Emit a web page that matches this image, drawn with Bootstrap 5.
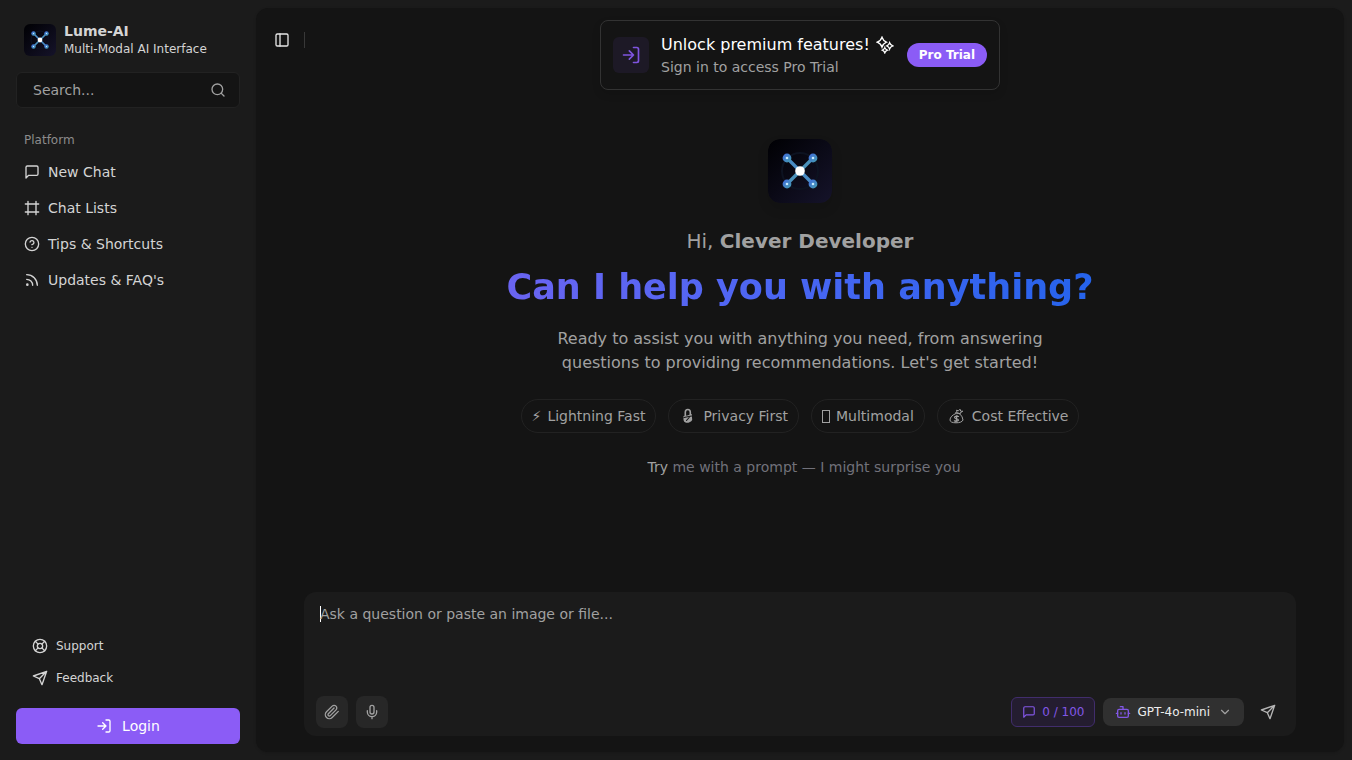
<!DOCTYPE html>
<html lang="en" data-bs-theme="dark">
<head>
<meta charset="utf-8">
<meta name="viewport" content="width=device-width, initial-scale=1">
<title>Lume-AI</title>
<link href="https://cdn.jsdelivr.net/npm/bootstrap@5.3.0/dist/css/bootstrap.min.css" rel="stylesheet">
<style>
:root { --side: #1b1b1b; --main: #141414; --muted: #a1a1a1; --accent: #8b5cf6; }
body { font-family: "DejaVu Sans", sans-serif; font-size: 14px; line-height: 20px; background: var(--side); color: #d4d4d4; }
svg { flex: none; fill: none; stroke: currentColor; stroke-width: 2; stroke-linecap: round; stroke-linejoin: round; }
.logo { stroke: none; }
.text-12 { font-size: 12px; line-height: 16px; }
.text-16 { font-size: 16px; line-height: 24px; }
.text-20 { font-size: 20px; line-height: 28px; }
.text-muted-2 { color: var(--muted); }
.sidebar { width: 256px; flex: none; padding: 16px; }
.brand { padding: 0 8px; height: 48px; }
.brand-text { padding-bottom: 2px; }
.search-box { background: var(--main); border: 1px solid #222; border-radius: 6px; height: 36px; padding: 0 13px 0 16px; margin-top: 8px; color: var(--muted); }
.search-box input, .prompt-box textarea { background: none; border: 0; outline: 0; padding: 0; color: #fafafa; min-width: 0; resize: none; }
input::placeholder, textarea::placeholder { color: var(--muted); opacity: 1; }
.side-title { color: #8c8c8c; padding: 0 8px; margin-top: 16px; height: 32px; }
.side-link { color: #d4d4d4; padding: 0 8px; height: 32px; gap: 8px; border-radius: 6px; }
.side-link.sm-link { padding: 0 16px; }
.btn-accent { background: var(--accent); color: #fff; border: 0; font-size: 14px; height: 36px; border-radius: 6px; margin-top: 14px; gap: 10px; }
.btn-accent:hover { background: #7c4df0; color: #fff; }
.panel { background: var(--main); margin: 8px 8px 8px 0; border-radius: 12px; box-shadow: 0 1px 3px rgba(0,0,0,.15); min-width: 0; }
.toggle-bar { top: 16px; left: 12px; }
.icon-btn { width: 28px; height: 32px; padding: 0; color: #e5e5e5; border: 0; }
.divider { width: 1px; height: 16px; background: #383838; margin-left: 8px; }
.promo { margin-top: 12px; width: 400px; max-width: 100%; height: 70px; border: 1px solid #333; border-radius: 8px; padding: 0 12px; gap: 12px; box-shadow: 0 4px 8px rgba(0,0,0,.12); }
.promo-title { gap: 6px; }
.promo-icon { width: 36px; height: 36px; border-radius: 6px; background: #1f1a29; color: var(--accent); opacity: .9; }
.btn-pill { background: var(--accent); color: #fff; font-size: 12px; line-height: 16px; font-weight: 700; padding: 4px 12px; border: 0; border-radius: 12px; }
.hero { padding-top: 49px; }
.hero .logo-wrap { border-radius: 12px; box-shadow: 0 6px 12px rgba(0,0,0,.12); }
.headline { font-size: 35px; line-height: 40px; font-weight: 700; margin: 12px 0 0; background: linear-gradient(90deg, #6a64f1, #4f66f3 40%, #2563eb); -webkit-background-clip: text; background-clip: text; color: transparent; }
.intro { max-width: 512px; margin: 20px 0 0; }
.chips { gap: 12px; }
.chip { border: 1px solid #222; border-radius: 17px; height: 34px; padding: 0 10px; gap: 6px; color: var(--muted); }
.no-glyph { width: 8px; height: 13px; border: 1px solid var(--muted); }
.hint { color: #71717a; margin: 24px 0 0; padding-left: 8px; }
.prompt-box { background: var(--side); border-radius: 12px; margin: 0 48px 16px; padding: 12px 12px 8px; height: 144px; }
/* a thin caret at the start of the empty prompt */
.prompt-box textarea { margin: 0 4px; caret-color: #fff; }
.prompt-box textarea:placeholder-shown { background: linear-gradient(#fff, #fff) 0 2px / 1px 16px no-repeat; }
.tool-btn { width: 32px; height: 32px; background: #272727; border: 0; border-radius: 8px; color: var(--muted); padding: 0; }
.credit { border: 1px solid #412d6c; background: #241d30; color: #8257e5; height: 30px; padding: 0 10px; border-radius: 6px; gap: 6px; }
.model-btn { background: #303030; border: 0; color: #ededed; height: 28px; padding: 0 12px; border-radius: 8px; gap: 6px; }
.model-btn .bot-icon { color: #8257e5; }
.model-btn .down-icon { color: var(--muted); margin-left: 2px; }
.send-btn { width: 32px; height: 32px; color: #b5b5b5; border: 0; padding: 0; }
</style>
</head>
<body>
<svg class="position-absolute" width="0" height="0" aria-hidden="true">
  <defs>
    <linearGradient id="tile" x1="0" y1="0" x2="1" y2="1"><stop stop-color="#000003"/><stop offset="1" stop-color="#15132a"/></linearGradient>
    <linearGradient id="node" x1="0" y1="0" x2="1" y2="1"><stop stop-color="#4169df"/><stop offset="1" stop-color="#459fae"/></linearGradient>
  </defs>
  <symbol id="lume" viewBox="0 0 64 64">
    <rect width="64" height="64" rx="12" fill="url(#tile)"/>
    <circle cx="32" cy="32" r="18" fill="none" stroke="#0d1220"/>
    <path d="M19 19L45 45" stroke="#4a8cc4" stroke-width="3.4"/><path d="M45 19L19 45" stroke="#4b91bb" stroke-width="3.4"/>
    <g fill="url(#node)"><circle cx="19" cy="19" r="4.4"/><circle cx="45" cy="19" r="4.4"/><circle cx="19" cy="45" r="4.4"/><circle cx="45" cy="45" r="4.4"/></g>
    <g fill="#c8ecff"><circle cx="19" cy="19" r="1.3"/><circle cx="45" cy="19" r="1.3"/><circle cx="19" cy="45" r="1.3"/><circle cx="45" cy="45" r="1.3"/></g>
    <circle cx="32" cy="32" r="4.8" fill="#fff"/>
  </symbol>
  <symbol id="chat" viewBox="0 0 24 24"><path d="M21 15a2 2 0 0 1-2 2H7l-4 4V5a2 2 0 0 1 2-2h14a2 2 0 0 1 2 2z"/></symbol>
  <symbol id="frame" viewBox="0 0 24 24"><path d="M22 6H2M22 18H2M6 2v20M18 2v20"/></symbol>
  <symbol id="help" viewBox="0 0 24 24"><circle cx="12" cy="12" r="10"/><path d="M9.09 9a3 3 0 0 1 5.83 1c0 2-3 3-3 3M12 17h.01"/></symbol>
  <symbol id="rss" viewBox="0 0 24 24"><path d="M4 11a9 9 0 0 1 9 9M4 4a16 16 0 0 1 16 16"/><circle cx="5" cy="19" r="1"/></symbol>
  <symbol id="buoy" viewBox="0 0 24 24"><circle cx="12" cy="12" r="10"/><path d="m4.93 4.93 4.24 4.24M14.83 9.17l4.24-4.24M14.83 14.83l4.24 4.24M9.17 14.83l-4.24 4.24"/><circle cx="12" cy="12" r="4"/></symbol>
  <symbol id="send" viewBox="0 0 24 24"><path d="m22 2-7 20-4-9-9-4ZM22 2 11 13"/></symbol>
  <symbol id="login" viewBox="0 0 24 24"><path d="M15 3h4a2 2 0 0 1 2 2v14a2 2 0 0 1-2 2h-4M10 17l5-5-5-5M15 12H3"/></symbol>
  <symbol id="search" viewBox="0 0 24 24"><circle cx="11" cy="11" r="8"/><path d="m21 21-4.3-4.3"/></symbol>
  <symbol id="panel" viewBox="0 0 24 24"><rect x="3" y="3" width="18" height="18" rx="2"/><path d="M9 3v18"/></symbol>
  <symbol id="clip" viewBox="0 0 24 24"><path d="m21.44 11.05-9.19 9.19a6 6 0 0 1-8.49-8.49l8.57-8.57A4 4 0 1 1 18 8.84l-8.59 8.57a2 2 0 0 1-2.83-2.83l8.49-8.48"/></symbol>
  <symbol id="mic" viewBox="0 0 24 24"><path d="M12 2a3 3 0 0 0-3 3v7a3 3 0 0 0 6 0V5a3 3 0 0 0-3-3ZM19 10v2a7 7 0 0 1-14 0v-2M12 19v3"/></symbol>
  <symbol id="bot" viewBox="0 0 24 24"><path d="M12 8V4H8"/><rect x="4" y="8" width="16" height="12" rx="2"/><path d="M2 14h2M20 14h2M15 13v2M9 13v2"/></symbol>
  <symbol id="down" viewBox="0 0 24 24"><path d="m6 9 6 6 6-6"/></symbol>
  <symbol id="sparkles" viewBox="0 0 18 18"><g stroke-width="1.3" stroke-linejoin="miter"><path d="M6 1.2Q7.2 4.8 10.4 6.2Q7.2 7.6 6 11.2Q4.8 7.6 1.2 6.2Q4.800 4.800 6 1.200Z"/><path d="M13.600 6.800Q14.300 9 16.800 9.900Q14.300 10.800 13.600 13Q12.900 10.800 10.800 9.900Q12.900 9 13.600 6.800Z"/><path d="M8.800 11.600Q9.400 13.400 11.400 14.200Q9.400 15 8.800 16.800Q8.200 15 6.400 14.200Q8.200 13.400 8.800 11.600Z"/></g></symbol>
  <symbol id="lock" viewBox="0 0 18 16"><path d="M6.300 8V4.200Q6.300 1.500 8.800 1.500T11.300 4.200V7" stroke-width="1.600"/><path d="M4.500 8Q8 7.800 12.800 6L13.200 12Q11.500 15 7 14.800Q4.700 14.300 4.500 12Z" fill="currentColor" stroke="none"/><path d="M7.500 12.500L10.200 9.500M5 9.500L12.500 8" stroke="#141414" stroke-width="1.100"/></symbol>
  <symbol id="money" viewBox="0 0 18 16"><g stroke-width="1"><path d="M8.200 5.300Q2 8 2 12Q2.200 14.800 8 14.800T15 12Q15 8 11.200 5.500ZM7.500 4.800L12.500 5.800M9 4.500L8.500 2.200L10.500 2.800L12 1.200L12.800 3.300L14.800 3.200L11.800 5.200"/><path d="M10.500 8.500Q7 7.500 6.500 9.200C6.500 11 10.500 10.300 10.500 12.200Q9.500 13.700 6.300 12.800M8.900 7.300L8 14" stroke-width="1.200"/></g></symbol>
</svg>

<div class="d-flex vh-100">
  <aside class="sidebar d-flex flex-column">
    <div class="brand d-flex align-items-center gap-2">
      <svg class="logo" width="32" height="32"><use href="#lume"/></svg>
      <div class="brand-text d-flex flex-column"><strong>Lume-AI</strong><span class="text-12">Multi-Modal AI Interface</span></div>
    </div>
    <label class="search-box d-flex align-items-center">
      <input class="flex-grow-1" type="text" placeholder="Search..." aria-label="Search">
      <svg width="16" height="16"><use href="#search"/></svg>
    </label>
    <div class="side-title text-12 d-flex align-items-center">Platform</div>
    <nav class="d-flex flex-column gap-1">
      <a href="#" class="side-link d-flex align-items-center text-decoration-none"><svg width="16" height="16"><use href="#chat"/></svg>New Chat</a>
      <a href="#" class="side-link d-flex align-items-center text-decoration-none"><svg width="16" height="16"><use href="#frame"/></svg>Chat Lists</a>
      <a href="#" class="side-link d-flex align-items-center text-decoration-none"><svg width="16" height="16"><use href="#help"/></svg>Tips &amp; Shortcuts</a>
      <a href="#" class="side-link d-flex align-items-center text-decoration-none"><svg width="16" height="16"><use href="#rss"/></svg>Updates &amp; FAQ's</a>
    </nav>
    <div class="mt-auto">
      <a href="#" class="side-link sm-link text-12 d-flex align-items-center text-decoration-none"><svg width="16" height="16"><use href="#buoy"/></svg>Support</a>
      <a href="#" class="side-link sm-link text-12 d-flex align-items-center text-decoration-none"><svg width="16" height="16"><use href="#send"/></svg>Feedback</a>
      <button type="button" class="btn btn-accent w-100 d-flex align-items-center justify-content-center"><svg width="16" height="16"><use href="#login"/></svg>Login</button>
    </div>
  </aside>

  <main class="panel flex-grow-1 position-relative d-flex flex-column">
    <div class="toggle-bar position-absolute d-flex align-items-center">
      <button type="button" class="btn icon-btn d-flex align-items-center justify-content-center" aria-label="Toggle sidebar"><svg width="16" height="16"><use href="#panel"/></svg></button>
      <span class="divider"></span>
    </div>

    <div class="promo d-flex align-items-center align-self-center">
      <span class="promo-icon d-flex align-items-center justify-content-center flex-shrink-0"><svg width="20" height="20"><use href="#login"/></svg></span>
      <div class="flex-grow-1 text-nowrap"><div class="promo-title text-16 text-white d-flex align-items-center">Unlock premium features!<svg width="18" height="18"><use href="#sparkles"/></svg></div><div class="text-muted-2">Sign in to access Pro Trial</div></div>
      <button type="button" class="btn btn-pill text-nowrap">Pro Trial</button>
    </div>

    <section class="hero d-flex flex-column align-items-center text-center">
      <svg class="logo logo-wrap" width="64" height="64"><use href="#lume"/></svg>
      <p class="text-20 text-muted-2 mt-4 mb-0">Hi, <strong>Clever Developer</strong></p>
      <h1 class="headline">Can I help you with anything?</h1>
      <p class="intro text-16 text-muted-2">Ready to assist you with anything you need, from answering questions to providing recommendations. Let's get started!</p>
      <div class="chips d-flex flex-wrap justify-content-center mt-4">
        <span class="chip d-flex align-items-center"><span>⚡</span>Lightning Fast</span>
        <span class="chip d-flex align-items-center"><svg width="18" height="16"><use href="#lock"/></svg>Privacy First</span>
        <span class="chip d-flex align-items-center"><span class="no-glyph"></span>Multimodal</span>
        <span class="chip d-flex align-items-center"><svg width="18" height="16"><use href="#money"/></svg>Cost Effective</span>
      </div>
      <p class="hint"><span class="text-muted-2">Try</span> me with a prompt — I might surprise you</p>
    </section>

    <form class="prompt-box d-flex flex-column mt-auto" onsubmit="return false">
      <textarea class="flex-grow-1" placeholder="Ask a question or paste an image or file..." aria-label="Prompt"></textarea>
      <div class="d-flex align-items-center gap-2">
        <button type="button" class="btn tool-btn d-flex align-items-center justify-content-center" aria-label="Attach file"><svg width="16" height="16"><use href="#clip"/></svg></button>
        <button type="button" class="btn tool-btn d-flex align-items-center justify-content-center" aria-label="Record voice"><svg width="16" height="16"><use href="#mic"/></svg></button>
        <span class="credit text-12 d-flex align-items-center ms-auto"><svg width="14" height="14"><use href="#chat"/></svg>0 / 100</span>
        <button type="button" class="btn model-btn text-12 d-flex align-items-center"><svg class="bot-icon" width="16" height="16"><use href="#bot"/></svg>GPT-4o-mini<svg class="down-icon" width="14" height="14"><use href="#down"/></svg></button>
        <button type="submit" class="btn send-btn d-flex align-items-center justify-content-center" aria-label="Send"><svg width="16" height="16"><use href="#send"/></svg></button>
      </div>
    </form>
  </main>
</div>
<script src="https://cdn.jsdelivr.net/npm/bootstrap@5.3.0/dist/js/bootstrap.bundle.min.js"></script>
</body>
</html>
